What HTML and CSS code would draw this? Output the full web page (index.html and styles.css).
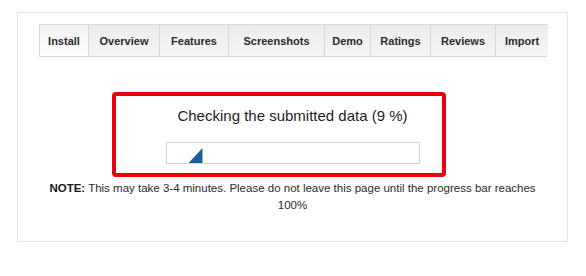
FILE: index.html
```html
<!DOCTYPE html>
<html>
<head>
<meta charset="utf-8">
<link rel="stylesheet" href="styles.css">
</head>
<body>
<div class="panel">
  <ul class="tabs">
    <li class="tab active">Install</li>
    <li class="tab">Overview</li>
    <li class="tab">Features</li>
    <li class="tab">Screenshots</li>
    <li class="tab">Demo</li>
    <li class="tab">Ratings</li>
    <li class="tab">Reviews</li>
    <li class="tab">Import</li>
  </ul>
  <div class="content">
    <p class="status">Checking the submitted data (9 %)</p>
    <div class="progress"><span class="progress-mark"></span></div>
    <p class="note"><b>NOTE:</b> This may take 3-4 minutes. Please do not leave this page until the progress bar reaches 100%</p>
  </div>
  <div class="highlight"></div>
</div>
</body>
</html>
```
FILE: styles.css
```css
html, body {
  margin: 0;
  padding: 0;
  background: #fff;
}
body {
  font-family: "Liberation Sans", Arial, sans-serif;
  color: #222;
}
.panel {
  position: relative;
  box-sizing: border-box;
  width: 551px;
  height: 230px;
  margin: 12px 0 0 17px;
  border: 1px solid #e6e6e6;
  padding: 11px 0 0 21px;
}
.tabs {
  list-style: none;
  margin: 0;
  padding: 0;
  display: grid;
  grid-template-columns: 48px 71px 69px 96px 46px 60px 65px 53px;
  width: 508px;
  box-sizing: border-box;
  border: 1px solid #d8d8d8;
  height: 33px;
}
.tab {
  display: flex;
  align-items: center;
  justify-content: center;
  font-size: 11px;
  font-weight: bold;
  color: #2a2a2a;
  background: linear-gradient(#ececec, #f6f6f6);
  border-left: 1px solid #d8d8d8;
  padding-top: 1px;
}
.tab:first-child {
  border-left: none;
}
.tab.active {
  background: linear-gradient(#f2f2f2, #fdfdfd);
}
.content {
  margin-left: -21px;
  display: flex;
  flex-direction: column;
  align-items: center;
}
.status {
  margin: 50px 0 0;
  font-size: 15px;
  line-height: 18px;
  color: #1e1e1e;
}
.progress {
  margin-top: 17px;
  box-sizing: border-box;
  width: 254px;
  height: 22px;
  border: 1px solid #d6d6d6;
  background: #fff;
  display: flex;
  align-items: flex-end;
  padding-left: 22px;
}
.progress-mark {
  width: 14px;
  height: 15px;
  background: #1a5f9c;
  clip-path: polygon(100% 0, 100% 100%, 0 100%);
}
.note {
  margin: 16px 0 0;
  width: 500px;
  text-align: center;
  font-size: 11.5px;
  line-height: 17px;
  color: #2a2a2a;
}
.note b {
  color: #1a1a1a;
}
.highlight {
  position: absolute;
  left: 94px;
  top: 79px;
  width: 334px;
  height: 85px;
  box-sizing: border-box;
  border: 4px solid #e8000a;
  border-radius: 4px;
}
```
